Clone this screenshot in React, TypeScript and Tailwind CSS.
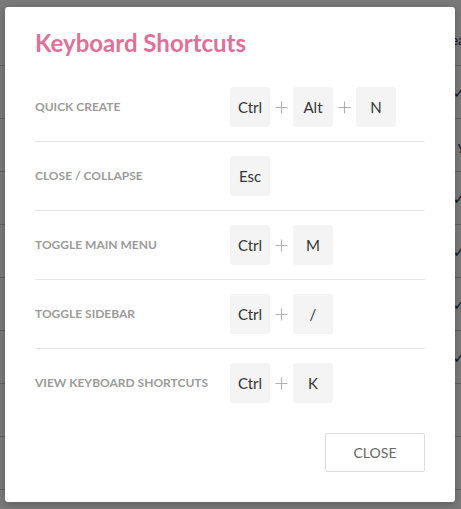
import React from "react";

const rows: { label: string; keys: string[] }[] = [
  { label: "QUICK CREATE", keys: ["Ctrl", "Alt", "N"] },
  { label: "CLOSE / COLLAPSE", keys: ["Esc"] },
  { label: "TOGGLE MAIN MENU", keys: ["Ctrl", "M"] },
  { label: "TOGGLE SIDEBAR", keys: ["Ctrl", "/"] },
  { label: "VIEW KEYBOARD SHORTCUTS", keys: ["Ctrl", "K"] },
];

const bgRows = ["ea", "✓", "y", "✓", "✓", "✓", "✓", "", "", ""];

export default function App() {
  return (
    <div
      className="relative w-[461px] h-[509px] overflow-hidden bg-white"
      style={{ fontFamily: "Lato, 'Open Sans', sans-serif" }}
    >
      {/* background page */}
      <div className="flex flex-col pt-[13px]">
        {bgRows.map((t, i) => (
          <div
            key={i}
            className="h-[53px] border-b border-[#c8c8c8] flex items-center justify-end text-[14px] text-[#1a2a50] whitespace-nowrap"
          >
            <span className="-mr-[4px]">{t}</span>
          </div>
        ))}
      </div>

      {/* overlay */}
      <div className="absolute inset-0 bg-black/[0.52] flex justify-start items-start pt-[7px] pl-[5px]">
        <div className="w-[450px] bg-white rounded-[3px] shadow-[0_2px_8px_rgba(0,0,0,0.25)] px-[30px] pt-[21px] pb-[30px] flex flex-col">
          <h1 className="text-[24px] leading-[30px] font-bold text-[#e0709a] mb-[15px]">
            Keyboard Shortcuts
          </h1>
          <div className="flex flex-col">
            {rows.map((r, i) => (
              <div
                key={r.label}
                className={`flex items-center py-[14px] ${
                  i < rows.length - 1 ? "border-b border-[#e6e6e6]" : ""
                }`}
              >
                <div className="w-[195px] text-[12px] font-bold text-[#9b9b9b]">
                  {r.label}
                </div>
                <div className="flex items-center">
                  {r.keys.map((k, j) => (
                    <React.Fragment key={k + j}>
                      {j > 0 && (
                        <span className="w-[23px] flex items-center justify-center">
                          <svg width="13" height="13" viewBox="0 0 13 13">
                            <path d="M6.5 0.5V12.5M0.5 6.5H12.5" stroke="#b0b0b0" strokeWidth="1.1" />
                          </svg>
                        </span>
                      )}
                      <span className="w-[40px] h-[40px] rounded-[3px] bg-[#f4f4f4] flex items-center justify-center text-[15px] text-[#333]">
                        {k}
                      </span>
                    </React.Fragment>
                  ))}
                </div>
              </div>
            ))}
          </div>
          <div className="flex justify-end mt-[16px]">
            <button className="w-[100px] h-[39px] border border-[#dcdcdc] rounded-[2px] bg-white text-[14px] text-[#666]">
              CLOSE
            </button>
          </div>
        </div>
      </div>
    </div>
  );
}
